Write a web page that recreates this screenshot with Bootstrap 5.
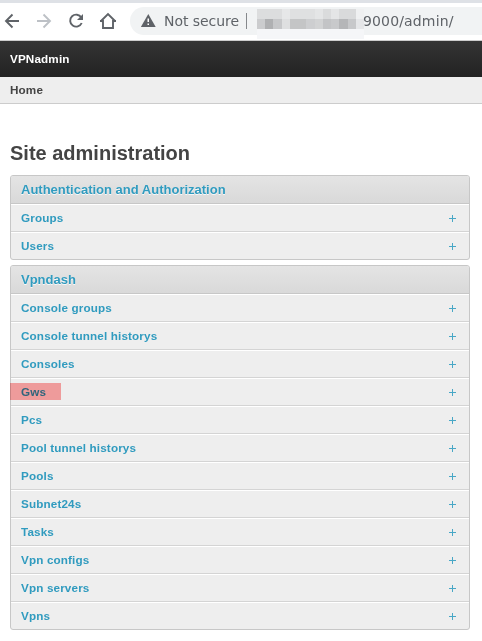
<!DOCTYPE html>
<html lang="en">
<head>
<meta charset="utf-8">
<meta name="viewport" content="width=device-width, initial-scale=1">
<title>Site administration</title>
<link href="https://cdn.jsdelivr.net/npm/bootstrap@5.3.0/dist/css/bootstrap.min.css" rel="stylesheet">
<style>
body{font-family:"Liberation Sans",Arial,sans-serif;font-size:11.7px;letter-spacing:.14px;font-weight:700;color:#444;background:#fff;min-height:641px;overflow:hidden}
.browser-bar{height:41px;border-top:3px solid #dee1e6;border-bottom:1px solid #ccc;background:#fff;color:#5f6368;font-family:"DejaVu Sans",sans-serif;font-weight:400;font-size:14px;letter-spacing:0}
.tool-icons{width:130px;flex:none}
.address{height:28px;margin-top:4px;background:#f1f3f4;border-radius:14px 0 0 14px;padding-left:11px}
.not-secure{margin-left:8px;width:75px;line-height:28px;letter-spacing:-.05px}
.url-path{line-height:28px;margin-left:-1px;letter-spacing:.15px}
.divider{width:1px;height:16px;background:#85888c;margin:6px 10px 0 7px}
.host-mask{width:107px;height:30px;margin-top:2px;flex:none}
.site-header{height:36px;background:linear-gradient(#343434,#222);color:#fff;line-height:36px}
.crumbs{height:27px;background:#eee;border-bottom:1px solid #ccc;line-height:26px}
.site-header,.crumbs{padding:0 10px}
.page-body{padding:0 12px 0 10px}
.page-body h1{font-size:20px;font-weight:700;line-height:24px;letter-spacing:0;margin:37px 0 10px}
.app-panel{border:1px solid #c7c7c7;border-radius:3px;background:#eee;margin-bottom:5px}
.app-panel h2{height:28px;line-height:28px;margin:0;padding:0 10px;font-size:13px;font-weight:700;letter-spacing:0;background:linear-gradient(#e4e4e4,#d9d9d9);border-bottom:1px solid #c7c7c7;border-radius:2px 2px 0 0;text-shadow:0 1px 0 #f8f8f8}
.app-panel a{color:#309bbf;text-decoration:none}
.model-row{height:28px;padding:0 13px 0 10px;border-top:1px solid #fff;border-bottom:1px solid #d4d4d4;line-height:26px}
.model-row:last-child{height:27px;border-bottom:0}
.marked{position:relative}
.marked::after{content:"";position:absolute;left:-11px;top:4px;width:51px;height:17px;background:#ffa6a6;mix-blend-mode:multiply}
</style>
</head>
<body>
<svg class="d-none"><symbol id="add" viewBox="0 0 7 7"><path d="M0 3.500h7M3.500 0v7" stroke="#48a7c6" stroke-width="1"/></symbol></svg>
<div class="browser-bar d-flex">
<svg class="tool-icons" height="37" viewBox="0 3 130 37" fill="none" stroke="#5f6368" stroke-width="1.9">
<path d="M19 21H6.500M12.500 14.500L6 21l6.500 6.500"/>
<path d="M37 21h12.500M43.500 14.500L50 21l-6.500 6.500" stroke="#bdc1c6"/>
<path d="M81.300 17.500A6 6 0 1 0 81.700 23"/><path d="M83 14v6h-6z" fill="#5f6368" stroke="none"/>
<path d="M100.500 21.500L108 14l7.500 7.500M100 21h3v7h10v-7h3"/>
</svg>
<div class="address d-flex flex-grow-1">
<svg width="15" height="28" viewBox="141 7 15 28" class="flex-shrink-0"><path d="M148.300 14l7.400 13h-14.800z" fill="#5f6368"/><path d="M147.500 18.500h1.500v3.500h-1.500zM147.500 23.500h1.500v1.500h-1.500z" fill="#fff"/></svg>
<span class="not-secure text-nowrap">Not secure</span><span class="divider"></span>
<svg class="host-mask" viewBox="0 0 107 30" shape-rendering="crispEdges">
<path fill="#f5f6f8" d="M0 0h107v30H0z"/>
<path fill="#dcddde" d="M0 0h25v10H0z"/><path fill="#e6e7e8" d="M25 0h8v10h-8z"/><path fill="#dfe0e1" d="M33 0h25v10H33z"/><path fill="#e4e5e6" d="M58 0h8v10h-8z"/><path fill="#dadbdc" d="M66 0h8v10h-8z"/><path fill="#e4e5e6" d="M74 0h8v10h-8z"/><path fill="#d9dadb" d="M82 0h17v10H82z"/><path fill="#eff0f1" d="M99 0h8v10h-8z"/>
<path fill="#cbccce" d="M0 10h8v10H0z"/><path fill="#afb0b2" d="M8 10h8v10H8z"/><path fill="#c6c7c9" d="M16 10h9v10h-9z"/><path fill="#dedfe0" d="M25 10h8v10h-8z"/><path fill="#c4c5c6" d="M33 10h16v10H33z"/><path fill="#cdced0" d="M49 10h9v10h-9z"/><path fill="#d2d3d4" d="M58 10h8v10h-8z"/><path fill="#c3c4c6" d="M66 10h8v10h-8z"/><path fill="#c8c9cb" d="M74 10h8v10h-8z"/><path fill="#b5b6b8" d="M82 10h9v10h-9z"/><path fill="#c7c8ca" d="M91 10h8v10h-8z"/><path fill="#e5e6e8" d="M99 10h8v10h-8z"/>
</svg>
<span class="url-path">9000/admin/</span>
</div>
</div>
<header class="site-header">VPNadmin</header>
<div class="crumbs">Home</div>
<main class="page-body">
<h1>Site administration</h1>
<section class="app-panel"><h2><a href="#">Authentication and Authorization</a></h2>
<div class="model-row d-flex justify-content-between align-items-center"><a href="#">Groups</a><svg width="7" height="7"><use href="#add"/></svg></div>
<div class="model-row d-flex justify-content-between align-items-center"><a href="#">Users</a><svg width="7" height="7"><use href="#add"/></svg></div>
</section>
<section class="app-panel"><h2><a href="#">Vpndash</a></h2>
<div class="model-row d-flex justify-content-between align-items-center"><a href="#">Console groups</a><svg width="7" height="7"><use href="#add"/></svg></div>
<div class="model-row d-flex justify-content-between align-items-center"><a href="#">Console tunnel historys</a><svg width="7" height="7"><use href="#add"/></svg></div>
<div class="model-row d-flex justify-content-between align-items-center"><a href="#">Consoles</a><svg width="7" height="7"><use href="#add"/></svg></div>
<div class="model-row d-flex justify-content-between align-items-center"><a href="#" class="marked">Gws</a><svg width="7" height="7"><use href="#add"/></svg></div>
<div class="model-row d-flex justify-content-between align-items-center"><a href="#">Pcs</a><svg width="7" height="7"><use href="#add"/></svg></div>
<div class="model-row d-flex justify-content-between align-items-center"><a href="#">Pool tunnel historys</a><svg width="7" height="7"><use href="#add"/></svg></div>
<div class="model-row d-flex justify-content-between align-items-center"><a href="#">Pools</a><svg width="7" height="7"><use href="#add"/></svg></div>
<div class="model-row d-flex justify-content-between align-items-center"><a href="#">Subnet24s</a><svg width="7" height="7"><use href="#add"/></svg></div>
<div class="model-row d-flex justify-content-between align-items-center"><a href="#">Tasks</a><svg width="7" height="7"><use href="#add"/></svg></div>
<div class="model-row d-flex justify-content-between align-items-center"><a href="#">Vpn configs</a><svg width="7" height="7"><use href="#add"/></svg></div>
<div class="model-row d-flex justify-content-between align-items-center"><a href="#">Vpn servers</a><svg width="7" height="7"><use href="#add"/></svg></div>
<div class="model-row d-flex justify-content-between align-items-center"><a href="#">Vpns</a><svg width="7" height="7"><use href="#add"/></svg></div>
</section>
</main>
<script src="https://cdn.jsdelivr.net/npm/bootstrap@5.3.0/dist/js/bootstrap.bundle.min.js"></script>
</body>
</html>
